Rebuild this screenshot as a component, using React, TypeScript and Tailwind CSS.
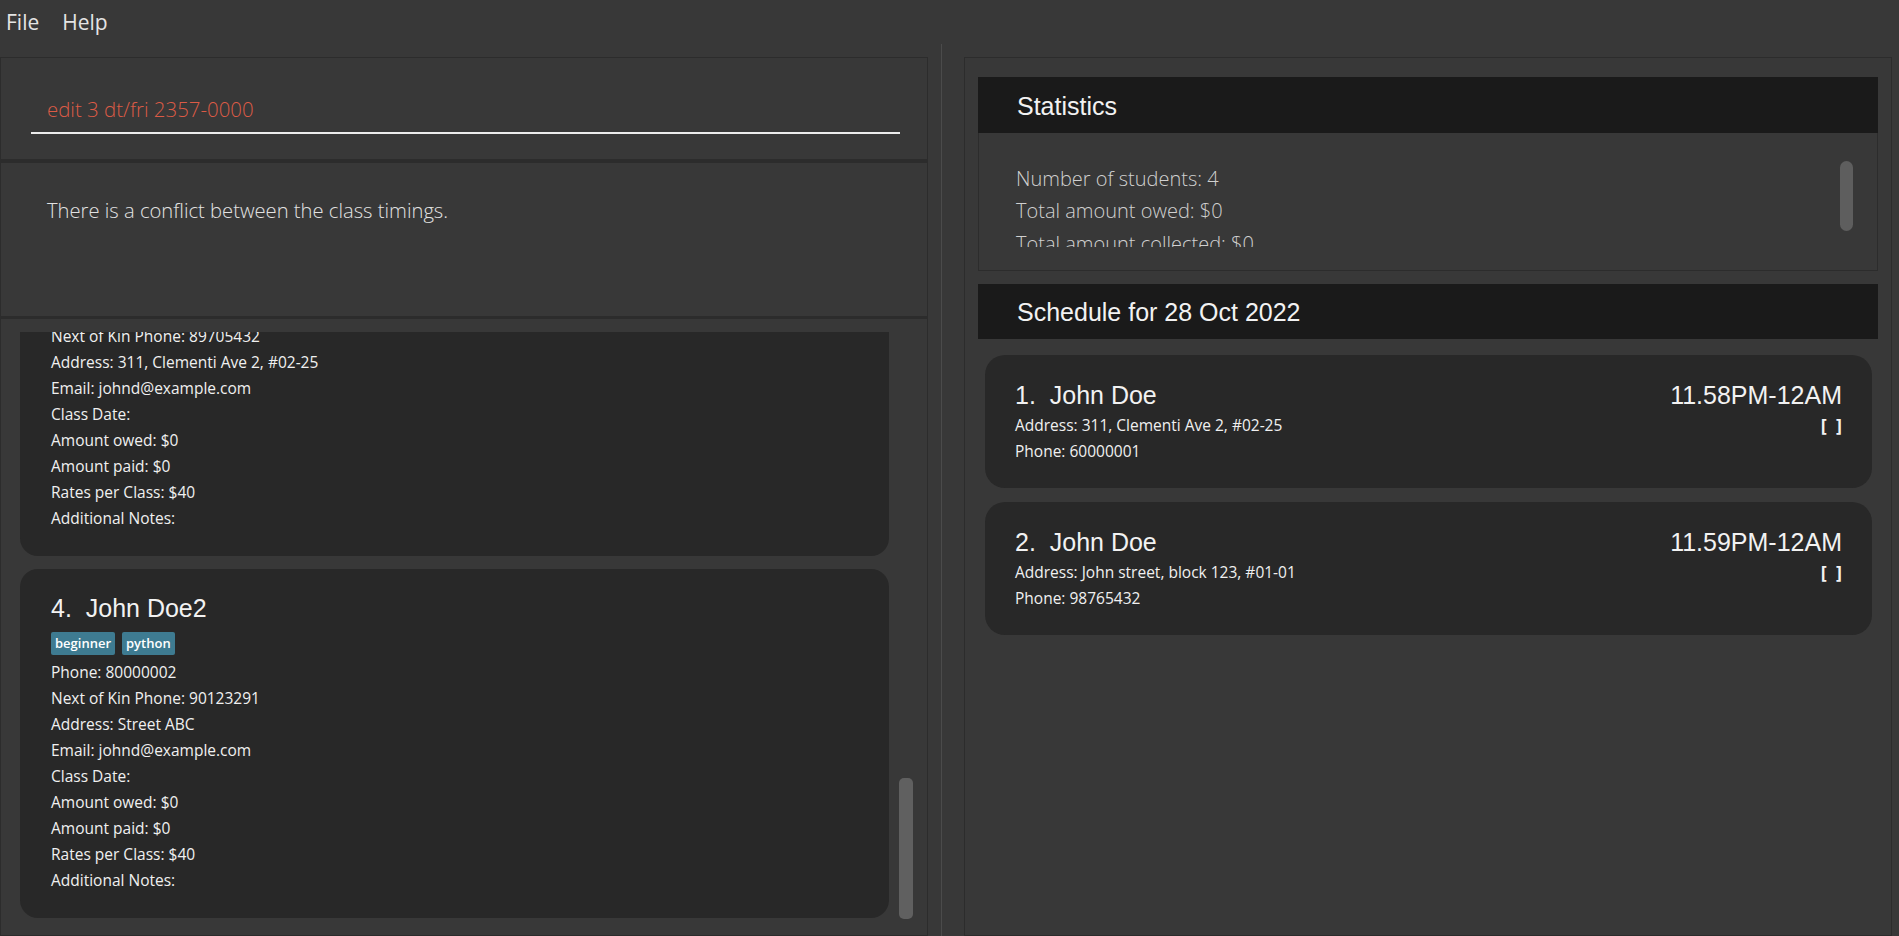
import React from 'react';

const ui = { fontFamily: '"Open Sans", "Noto Sans", sans-serif' };
const head = { fontFamily: '"Liberation Sans", Arial, sans-serif' };

type Student = {
    index: number;
    name: string;
    tags: string[];
    phone: string;
    nokPhone: string;
    address: string;
};

const STUDENTS: Student[] = [
    { index: 3, name: 'John Doe', tags: [], phone: '60000001', nokPhone: '89705432', address: '311, Clementi Ave 2, #02-25' },
    { index: 4, name: 'John Doe2', tags: ['beginner', 'python'], phone: '80000002', nokPhone: '90123291', address: 'Street ABC' },
];

const SCHEDULE = [
    { index: 1, name: 'John Doe', address: '311, Clementi Ave 2, #02-25', phone: '60000001', time: '11.58PM-12AM' },
    { index: 2, name: 'John Doe', address: 'John street, block 123, #01-01', phone: '98765432', time: '11.59PM-12AM' },
];

const StudentCard: React.FC<{ s: Student }> = ({ s }) => (
    <div className="bg-[#282828] rounded-[18px] pl-[31px] pr-[20px] pt-[24px] pb-[25px] shrink-0">
        <div className="h-[30px] leading-[30px] text-[25px] text-[#f2f2f2] whitespace-pre" style={head}>
            {`${s.index}.  ${s.name}`}
        </div>
        {s.tags.length > 0 && (
            <div className="flex gap-[7px] mt-[9px] mb-[4px]">
                {s.tags.map(t => (
                    <span key={t} className="h-[23px] leading-[23px] px-[4px] rounded-[2px] bg-[#3e7b91] text-white text-[13px] font-semibold" style={ui}>
                        {t}
                    </span>
                ))}
            </div>
        )}
        <div className="text-[15.5px] leading-[26px] text-[#f0f0f0]" style={ui}>
            <div>Phone: {s.phone}</div>
            <div>Next of Kin Phone: {s.nokPhone}</div>
            <div>Address: {s.address}</div>
            <div>Email: johnd@example.com</div>
            <div>Class Date:</div>
            <div>Amount owed: $0</div>
            <div>Amount paid: $0</div>
            <div>Rates per Class: $40</div>
            <div>Additional Notes:</div>
        </div>
    </div>
);

const App: React.FC = () => {
    return (
        <div className="w-[1899px] h-[936px] bg-[#383838] flex flex-col overflow-hidden">
            {/* Menu */}
            <div className="h-[44px] flex items-start pt-[7px] pl-[6px] gap-[23px] text-[21px] text-[#e4e4e4]" style={ui}>
                <span>File</span>
                <span>Help</span>
            </div>

            <div className="flex flex-1 min-h-0">
                {/* Left side */}
                <div className="w-[928px] flex flex-col pt-[13px]">
                    {/* Command box */}
                    <div className="h-[103px] border border-[#2c2c2c] pl-[30px] pr-[27px] pt-[33px]">
                        <div className="h-[43px] border-b-[2px] border-[#ececec] pl-[16px] pt-[3px] text-[20.4px] text-[#dc5b46] font-light" style={ui}>
                            edit 3 dt/fri 2357-0000
                        </div>
                    </div>
                    {/* Result display */}
                    <div className="h-[157px] border border-[#2c2c2c] border-t-[3px] pl-[46px] pt-[32px] text-[20.2px] text-[#e2e2e2] font-light" style={ui}>
                        There is a conflict between the class timings.
                    </div>
                    {/* Student list */}
                    <div className="flex-1 min-h-0 border border-[#2c2c2c] border-t-[2px] relative pt-[13px] pl-[19px] pr-[38px]">
                        <div className="h-[586px] overflow-hidden flex flex-col justify-end gap-[13px]">
                            {STUDENTS.map(s => <StudentCard key={s.index} s={s} />)}
                        </div>
                        <div className="absolute left-[898px] top-[459px] w-[14px] h-[141px] rounded-[5px] bg-[#606060]" />
                    </div>
                </div>

                {/* Divider */}
                <div className="w-[36px] flex justify-center pr-[10px]">
                    <div className="w-px h-full bg-[#4b4b4b]" />
                </div>

                {/* Right side */}
                <div className="w-[928px] pt-[13px]">
                    <div className="h-full border border-[#2c2c2c] px-[13px] pt-[19px]">
                        {/* Statistics */}
                        <div className="h-[194px] flex flex-col">
                            <div className="h-[56px] bg-[#1a1a1a] pl-[39px] pt-[3px] flex items-center text-[25px] text-[#f2f2f2]" style={head}>
                                Statistics
                            </div>
                            <div className="flex-1 border border-t-0 border-[#2c2c2c] pt-[13px] relative">
                                <div className="h-[101px] overflow-hidden pl-[37px] pt-[17px] text-[20px] leading-[32.3px] text-[#d0d0d0] font-light" style={ui}>
                                    <div>Number of students: 4</div>
                                    <div>Total amount owed: $0</div>
                                    <div>Total amount collected: $0</div>
                                </div>
                                <div className="absolute right-[24px] top-[28px] w-[13px] h-[70px] rounded-full bg-[#5e5e5e]" />
                            </div>
                        </div>

                        {/* Schedule */}
                        <div className="mt-[13px] h-[55px] bg-[#1a1a1a] pl-[39px] pt-[2px] flex items-center text-[25px] text-[#f2f2f2]" style={head}>
                            Schedule for 28 Oct 2022
                        </div>
                        <div className="ml-[7px] mr-[6px] mt-[16px] flex flex-col gap-[14px]">
                            {SCHEDULE.map(c => (
                                <div key={c.index} className="bg-[#282828] rounded-[20px] pl-[30px] pr-[30px] pt-[25px] pb-[24px] flex justify-between">
                                    <div>
                                        <div className="h-[30px] leading-[30px] text-[25px] text-[#f2f2f2] whitespace-pre" style={head}>
                                            {`${c.index}.  ${c.name}`}
                                        </div>
                                        <div className="text-[15.5px] leading-[26px] text-[#f0f0f0] mt-[2px]" style={ui}>
                                            <div>Address: {c.address}</div>
                                            <div>Phone: {c.phone}</div>
                                        </div>
                                    </div>
                                    <div className="flex flex-col items-end">
                                        <div className="h-[30px] leading-[30px] text-[25px] text-[#f2f2f2]" style={head}>
                                            {c.time}
                                        </div>
                                        <div className="mt-[2px] leading-[26px] text-[18px] font-bold text-[#f2f2f2] whitespace-pre" style={ui}>
                                            {'[  ]'}
                                        </div>
                                    </div>
                                </div>
                            ))}
                        </div>
                    </div>
                </div>
            </div>
        </div>
    );
};

export default App;
